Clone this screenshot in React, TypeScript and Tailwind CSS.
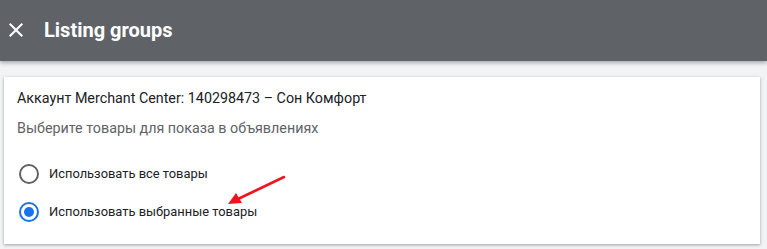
import React from "react";

export default function App() {
  return (
    <div className="w-[767px] h-[249px] bg-[#f1f3f4] overflow-hidden relative" style={{ fontFamily: "Roboto, 'Noto Sans', sans-serif" }}>
      <div className="h-[61px] bg-[#5f6368] flex items-center shadow-[0_2px_4px_rgba(0,0,0,0.3)] relative z-10">
        <svg width="24" height="24" viewBox="0 0 24 24" className="ml-[4px] mt-[-1px]">
          <path d="M19 6.41L17.59 5 12 10.59 6.41 5 5 6.41 10.59 12 5 17.59 6.41 19 12 13.41 17.59 19 19 17.59 13.41 12z" fill="#fff" />
        </svg>
        <span className="ml-[16px] text-white text-[20px] font-bold mt-[-2px]">Listing groups</span>
      </div>
      <div className="mt-[16px] ml-[4px] w-[756px] h-[167px] bg-white shadow-[0_1px_3px_rgba(0,0,0,0.35)] pt-[11px] pl-[13px]">
        <div className="text-[14.3px] text-[#202124] leading-[20px]">Аккаунт Merchant Center: 140298473 – Сон Комфорт</div>
        <div className="text-[14.3px] text-[#5f6368] leading-[20px] mt-[10px]">Выберите товары для показа в объявлениях</div>
        <div className="mt-[25px] flex items-center h-[22px]">
          <span className="w-[20px] h-[20px] rounded-full border-2 border-[#5f6368] ml-[2px]" />
          <span className="ml-[10px] text-[12.9px] text-[#202124]">Использовать все товары</span>
        </div>
        <div className="mt-[16px] flex items-center h-[22px]">
          <span className="w-[20px] h-[20px] rounded-full border-2 border-[#1a73e8] ml-[2px] flex items-center justify-center">
            <span className="w-[10px] h-[10px] rounded-full bg-[#1a73e8]" />
          </span>
          <span className="ml-[10px] text-[12.9px] text-[#202124]">Использовать выбранные товары</span>
        </div>
      </div>
      <svg className="absolute left-0 top-0" width="767" height="249" viewBox="0 0 767 249">
        <line x1="284" y1="177" x2="238" y2="199" stroke="#f0141e" strokeWidth="2.5" strokeLinecap="round" />
        <polygon points="228,204 236,193 242,203" fill="#f0141e" />
      </svg>
    </div>
  );
}
